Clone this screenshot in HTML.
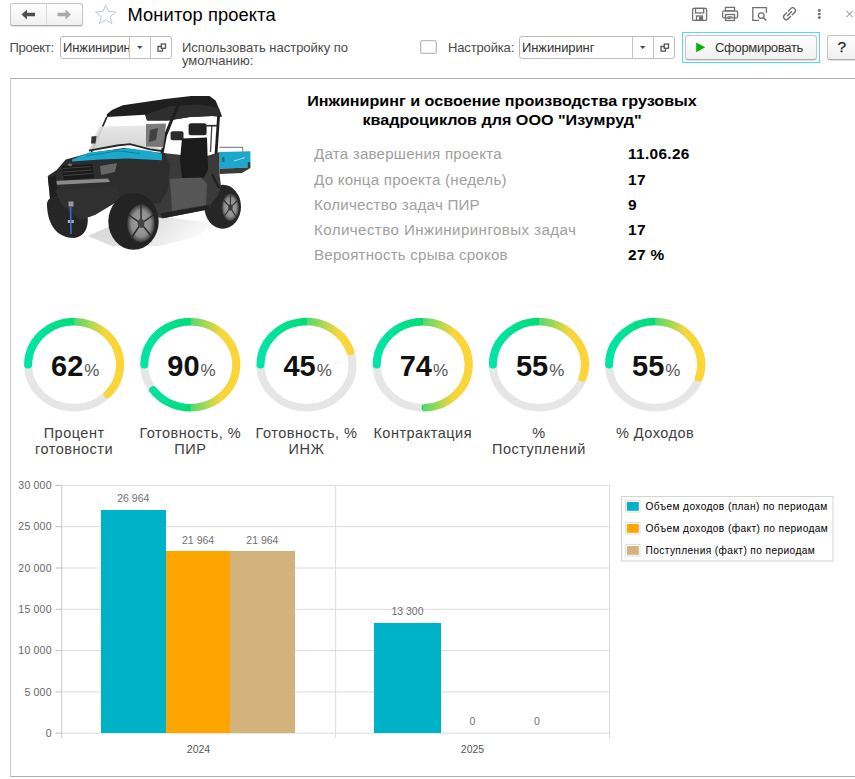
<!DOCTYPE html>
<html><head><meta charset="utf-8">
<style>
html,body{margin:0;padding:0;background:#fff;}
body{width:855px;height:779px;position:relative;overflow:hidden;font-family:"Liberation Sans",sans-serif;}
.a{position:absolute;white-space:nowrap;}
.btn{position:absolute;box-sizing:border-box;border:1px solid #c4c4c4;border-bottom-color:#aaa;border-radius:3px;background:linear-gradient(#ffffff,#f0f0f0);box-shadow:0 1px 1px rgba(0,0,0,0.12);}
.inp{position:absolute;box-sizing:border-box;border:1px solid #bcbcbc;border-radius:3px;background:#fff;overflow:hidden;}
.lbl{font-size:13px;color:#4a4a4a;}
.tx{position:absolute;white-space:nowrap;line-height:1;}
</style></head>
<body>
<!-- TOP BAR -->
<div class="btn" style="left:10px;top:3px;width:73px;height:23px;"></div>
<div class="a" style="left:46px;top:4px;width:1px;height:21px;background:#dcdcdc;"></div>
<svg class="a" style="left:0;top:0" width="855" height="30">
  <!-- left arrow -->
  <path d="M21.5 14.5 L27 9.5 L27 12.8 L35 12.8 L35 16.2 L27 16.2 L27 19.5 Z" fill="#4f4f4f"/>
  <!-- right arrow -->
  <path d="M71 14.5 L65.5 9.5 L65.5 12.8 L57.5 12.8 L57.5 16.2 L65.5 16.2 L65.5 19.5 Z" fill="#aaaaaa"/>
  <!-- star -->
  <path d="M105.7 5 L108.4 11.3 L115.8 12 L110.2 16.7 L112 23.6 L105.7 19.9 L99.4 23.6 L101.2 16.7 L95.6 12 L103 11.3 Z" fill="none" stroke="#b9c9d2" stroke-width="1"/>
  <!-- floppy -->
  <g fill="none" stroke="#707070" stroke-width="1.3">
    <rect x="692.6" y="8.4" width="14" height="12" rx="1"/>
    <rect x="695.5" y="8.4" width="8.2" height="4.5"/>
    <rect x="696.5" y="16" width="6" height="4.4"/>
  </g>
  <rect x="699" y="16.5" width="3" height="4" fill="#707070"/>
  <!-- printer -->
  <g fill="none" stroke="#707070" stroke-width="1.3">
    <rect x="725.5" y="7.4" width="9" height="3.5"/>
    <rect x="722.6" y="10.9" width="15" height="7" rx="1.5"/>
    <rect x="725.5" y="14.5" width="9" height="6"/>
  </g>
  <path d="M727.5 16.8 H732.5 M727.5 18.6 H730.5" stroke="#707070" stroke-width="1"/>
  <!-- preview -->
  <path d="M759 20.4 H752.8 V7.6 H766.4 V13" fill="none" stroke="#707070" stroke-width="1.3"/>
  <circle cx="761.2" cy="15.6" r="2.8" fill="none" stroke="#707070" stroke-width="1.3"/>
  <path d="M763.3 17.7 L766.3 20.5" stroke="#707070" stroke-width="1.6"/>
  <!-- link -->
  <g transform="translate(789.5 13.7) rotate(-45)" fill="none" stroke="#6a6a6a" stroke-width="1.3" stroke-linecap="round">
    <path d="M-1.2 -2.7 H-4.5 A2.7 2.7 0 0 0 -4.5 2.7 H-1.2"/>
    <path d="M1.2 2.7 H4.5 A2.7 2.7 0 0 0 4.5 -2.7 H1.2"/>
    <path d="M-3 0 H3"/>
  </g>
  <!-- dots -->
  <circle cx="819.3" cy="10.5" r="1.45" fill="#707070"/>
  <circle cx="819.3" cy="14.1" r="1.45" fill="#707070"/>
  <circle cx="819.3" cy="17.6" r="1.45" fill="#707070"/>
  <!-- close -->
  <path d="M846.3 10.8 L852.7 17.2 M852.7 10.8 L846.3 17.2" stroke="#808080" stroke-width="1"/>
</svg>
<div class="tx" style="left:127.5px;top:6px;font-size:18.3px;letter-spacing:0.12px;color:#000;">Монитор проекта</div>

<!-- ROW 2 -->
<div class="tx lbl" style="left:9.5px;top:41px;letter-spacing:-0.3px;">Проект:</div>
<div class="inp" style="left:60px;top:36px;width:112px;height:23px;">
  <div class="tx" style="left:2px;top:4px;font-size:13px;color:#333;width:66px;overflow:hidden;letter-spacing:-0.1px;">Инжиниринг</div>
</div>
<div class="a" style="left:129px;top:37px;width:1px;height:21px;background:#c4c4c4;"></div>
<div class="a" style="left:150px;top:37px;width:1px;height:21px;background:#c4c4c4;"></div>
<div class="tx lbl" style="left:182px;top:41px;line-height:13px;">Использовать настройку по<br>умолчанию:</div>
<div class="a" style="left:420px;top:40px;width:15px;height:12px;border:1px solid #bdbdbd;border-radius:2px;box-shadow:inset 0 0 0 0.6px #dcdcdc;"></div>
<div class="tx lbl" style="left:448px;top:41px;letter-spacing:-0.15px;">Настройка:</div>
<div class="inp" style="left:519px;top:36px;width:156px;height:23px;">
  <div class="tx" style="left:2px;top:4px;font-size:13px;color:#333;letter-spacing:-0.1px;">Инжиниринг</div>
</div>
<div class="a" style="left:632px;top:37px;width:1px;height:21px;background:#c4c4c4;"></div>
<div class="a" style="left:653px;top:37px;width:1px;height:21px;background:#c4c4c4;"></div>
<svg class="a" style="left:0;top:0" width="855" height="70">
  <path d="M137 46 H142.5 L139.75 48.9 Z" fill="#4a4a4a"/>
  <path d="M640 46 H645.5 L642.75 48.9 Z" fill="#4a4a4a"/>
  <g fill="none" stroke="#555" stroke-width="1.3">
    <rect x="161.3" y="44" width="4.2" height="4.3"/>
    <path d="M161.3 46.5 H158 V51.2 H162.5 V48.3"/>
    <rect x="664.3" y="44" width="4.2" height="4.3"/>
    <path d="M664.3 46.5 H661 V51.2 H665.5 V48.3"/>
  </g>
</svg>
<div class="a" style="left:682px;top:32px;width:136px;height:29px;border:1px solid #55d5fa;"></div>
<div class="btn" style="left:685px;top:35px;width:132px;height:25px;"></div>
<svg class="a" style="left:696px;top:42px" width="11" height="12"><path d="M0.2 0.4 L9.2 5.3 L0.2 10.2 Z" fill="#04b404"/></svg>
<div class="tx" style="left:715px;top:40.5px;font-size:13px;color:#333;letter-spacing:-0.3px;">Сформировать</div>
<div class="btn" style="left:827px;top:35px;width:40px;height:25px;"></div>
<div class="tx" style="left:837.6px;top:38.9px;font-size:15.5px;color:#1a1a1a;-webkit-text-stroke:0.25px #1a1a1a;">?</div>

<!-- CONTENT FRAME -->
<div class="a" style="left:10px;top:78px;width:900px;height:697px;border:1px solid #adadad;border-left-color:#c9c9c9;"></div>



<!-- UTV -->
<svg class="a" style="left:0;top:0" width="300" height="270">
  <defs>
    <linearGradient id="shd" x1="0" y1="0" x2="1" y2="0.3"><stop offset="0" stop-color="#d4d4d4"/><stop offset="0.6" stop-color="#e2e2e2"/><stop offset="1" stop-color="#fafafa"/></linearGradient>
    <linearGradient id="ws" x1="0" y1="0" x2="0" y2="1"><stop offset="0" stop-color="#e6e6e6"/><stop offset="1" stop-color="#cdcdcd"/></linearGradient>
    <radialGradient id="rim" cx="0.5" cy="0.5" r="0.5"><stop offset="0" stop-color="#4a4a4a"/><stop offset="0.3" stop-color="#9a9a9a"/><stop offset="0.7" stop-color="#8c8c8c"/><stop offset="1" stop-color="#3a3a3a"/></radialGradient>
  </defs>
  <!-- ground shadow -->
  <path d="M88 236 L120 222 L150 215 L212 223 L200 236 L160 246 L112 246 Z" fill="url(#shd)"/>
  <!-- rear wheel -->
  <ellipse cx="222.7" cy="206.7" rx="18.3" ry="22" fill="#262626"/>
  <ellipse cx="230.4" cy="207.4" rx="8.6" ry="13.6" fill="url(#rim)"/>
  <g stroke="#333" stroke-width="1.1"><path d="M230.4 207.4 L230.4 195 M230.4 207.4 L237 201 M230.4 207.4 L236 217 M230.4 207.4 L224.5 216 M230.4 207.4 L223.5 200"/></g>
  <ellipse cx="230.4" cy="207.4" rx="2.2" ry="3" fill="#3a3a3a"/>
  <!-- roof -->
  <path d="M106.8 114.3 L112 110 L122.8 105.2 L165.4 99.1 L191.2 96.1 L209.5 96.1 L215.6 100.6 L221.6 115.1 L221.6 116.8 L212 116 L190 117 L168 120.6 L147 120.6 L145 114.8 L106.8 117 Z" fill="#1f1f1f"/>
  <path d="M147 120.6 L168 120.6 L190 117 L212 116 L221.6 116.8 L219 108 L200 104.5 L170 106 L146 114.5 Z" fill="#2e2e2e"/>
  <!-- roll bars -->
  <path d="M106.8 117 L100 132.6 L91.5 152" stroke="#2a2a2a" stroke-width="1.8" fill="none"/>
  <path d="M179 103.7 L171.5 120.4 L165.4 135.6 L160.8 160" stroke="#1e1e1e" stroke-width="3" fill="none"/>
  <path d="M218.6 115.8 L215.6 160" stroke="#1e1e1e" stroke-width="2.8" fill="none"/>
  <path d="M211.8 126 L210.5 152" stroke="#444" stroke-width="1.3" fill="none"/>
  <path d="M206.4 125.7 L218.6 125.7" stroke="#2a2a2a" stroke-width="1.6" fill="none"/>
  <!-- windshield -->
  <path d="M99 126.5 L150 125.5 L166 124.5 L163 148 L150 149.4 L130 144.2 L117.2 145.5 L88.9 150.6 Z" fill="url(#ws)" opacity="0.9"/>
  <path d="M88.9 150.6 L117.2 145.5 L130 144.2 L150 149.4 L162 151" stroke="#262626" stroke-width="1.8" fill="none"/>
  <path d="M146 124 L166 123.5 L163.5 147 L146 146.5 Z" fill="#555" opacity="0.75"/>
  <path d="M150 130 L158 128 L156 140 L149 142 Z" fill="#333" opacity="0.8"/>
  <!-- mirrors -->
  <path d="M91.5 136.5 L96.6 136 L95.5 143.5 L91 143.5 Z" fill="#333"/>
  <rect x="170.6" y="131.3" width="12.9" height="9" rx="2" fill="#2b2b2b"/>
  <!-- cargo box -->
  <path d="M219.5 147.4 L242.7 147.4 L242.7 151.9" stroke="#8a8a8a" stroke-width="1.1" fill="none"/>
  <path d="M219.5 151.9 L250.4 151.3 L250.4 162.2 L247.8 167.4 L219.5 168.7 Z" fill="#1ca8cc"/>
  <path d="M247.8 162.2 L250.4 162.2 L250.4 168 L242 173 L219.5 174 L219.5 168.7 L247.8 167.4 Z" fill="#3a3a3a"/>
  <path d="M234 161 L245 157.5" stroke="#cfe8ef" stroke-width="0.8"/>
  <rect x="222" y="157" width="2.5" height="5" fill="#2a6d80"/>
  <!-- rear body / rocker -->
  <path d="M150 158 L163 153 L182 155 L207 156 L219.5 152 L219.5 174 L221 186 L218.2 195.2 L210.5 204.2 L209.2 209.3 L162.9 218.3 L150 215.8 Z" fill="#3a3a3a"/>
  <path d="M170 179 L200 176.5 L207 184 L206 205 L172 211 Z" fill="#565656"/>
  <path d="M160 213.5 L209.2 205 L209.2 209.3 L162.9 218.3 Z" fill="#222"/>
  <path d="M212 174 L219 188" stroke="#1e1e1e" stroke-width="2"/>
  <!-- seat -->
  <rect x="188.6" y="123.2" width="18" height="12" rx="2.5" fill="#232323"/>
  <path d="M182 138.5 L207 137.5 L208 170 L204 177.6 L182 178 L180 160 Z" fill="#1b1b1b"/>
  <!-- front body -->
  <path d="M56.7 170 L65.7 159.6 L72.2 157.7 L88.9 153.2 L123.7 148.1 L150 151.9 L165 153 L170 165 L168 190 L160 203 L140 206 L117.2 197.7 L100.5 210.6 L88.9 217 L78.6 210.6 L55.4 202.9 L49 187.4 L47.7 175.9 Z" fill="#2d2d2d"/>
  <!-- hood blue -->
  <path d="M72.1 159.4 L88.9 152.4 L128.2 148.2 L150 151 L161.9 153.8 L161.9 160.2 L128.2 158.5 L100 159.5 L72.1 161.4 Z" fill="#1aa8cc"/>
  <path d="M86 156 L118 150.8 L140 153.5" stroke="#0f7d9c" stroke-width="0.9" fill="none"/>
  <!-- grille & lights -->
  <path d="M62 166 L92 164 L94 178 L64 180 Z" fill="#1a1a1a"/>
  <path d="M63 168.5 L91 166.5 M63 172 L92 170 M64 175.5 L93 173.5" stroke="#4d4d4d" stroke-width="0.8"/>
  <ellipse cx="70" cy="164.8" rx="2" ry="1.4" fill="#777"/>
  <path d="M100 166 L117 163 L115 172 L101 175 Z" fill="#666"/>
  <path d="M52.9 181 L108 178.5 L110 182 L53.5 185 Z" fill="#8a8a8a"/>
  <path d="M88 191.5 L103 187.5 L103 190.5 L89 194.5 Z" fill="#8a8a8a"/>
  <path d="M48 178 L56 175 L58 200 L50 200 Z" fill="#1e1e1e"/>
  <!-- front small wheel -->
  <path d="M47 206 C46 197 56 194 66 198 L86 208 C90 222 88 236 74 238 C58 238 48 226 47 206 Z" fill="#262626"/>
  <!-- bumper lower -->
  <path d="M55 190 L117 186 L120 200 L95 215 L80 220 L62 205 Z" fill="#303030"/>
  <!-- winch strap -->
  <rect x="68.5" y="201.5" width="5" height="5" fill="#9a9a9a"/>
  <rect x="67.8" y="220" width="6" height="3" fill="#aaa"/>
  <path d="M70.5 206 L71 234" stroke="#3a6fd0" stroke-width="1.6"/>
  <!-- big front wheel -->
  <ellipse cx="133.5" cy="221.5" rx="25.2" ry="28.3" fill="#232323"/>
  <ellipse cx="141" cy="223.4" rx="13.8" ry="18.8" fill="url(#rim)"/>
  <g stroke="#2b2b2b" stroke-width="1.5">
    <path d="M141 223.4 L141 205.5 M141 223.4 L153.5 215 M141 223.4 L151.5 236.5 M141 223.4 L131 238.5 M141 223.4 L128 214.5"/>
  </g>
  <ellipse cx="141" cy="223.4" rx="3.3" ry="4.4" fill="#444"/>
</svg>

<!-- TEXT BLOCK -->
<div class="tx" style="left:251.5px;top:92.3px;width:500px;text-align:center;font-size:14.8px;line-height:19px;font-weight:bold;color:#000;transform:scaleX(1.09);transform-origin:250px 0;">Инжиниринг и освоение производства грузовых<br>квадроциклов для ООО "Изумруд"</div>
<div class="tx" style="left:314px;top:142.3px;font-size:14px;line-height:25.2px;letter-spacing:0.2px;color:#a0a0a0;transform:scaleX(1.08);transform-origin:0 0;">Дата завершения проекта<br>До конца проекта (недель)<br>Количество задач ПИР<br><span style="letter-spacing:0.38px">Количество Инжиниринговых задач</span><br>Вероятность срыва сроков</div>
<div class="tx" style="left:627.5px;top:142.3px;font-size:14px;line-height:25.2px;letter-spacing:0.3px;font-weight:bold;color:#000;transform:scaleX(1.1);transform-origin:0 0;">11.06.26<br>17<br>9<br>17<br>27 %</div>

<svg class="a" style="left:0;top:0" width="855" height="779"><defs><linearGradient id="gg" gradientUnits="userSpaceOnUse" x1="-50" y1="0" x2="50" y2="0"><stop offset="0" stop-color="#00e6aa"/><stop offset="0.5" stop-color="#00dc76"/><stop offset="0.505" stop-color="#52d96c"/><stop offset="0.8" stop-color="#f5d63c"/><stop offset="1" stop-color="#fed533"/></linearGradient></defs>
<g transform="translate(74.1 364.7) scale(1 0.936)"><circle r="46" fill="none" stroke="#e6e6e6" stroke-width="8"/><path d="M-46 0 A46 46 0 1 1 33.53 31.49" fill="none" stroke="url(#gg)" stroke-width="8" stroke-linecap="round"/></g>
<g transform="translate(190.3 364.7) scale(1 0.936)"><circle r="46" fill="none" stroke="#e6e6e6" stroke-width="8"/><path d="M-46 0 A46 46 0 1 1 -37.21 27.04" fill="none" stroke="url(#gg)" stroke-width="8" stroke-linecap="round"/></g>
<g transform="translate(306.5 364.7) scale(1 0.936)"><circle r="46" fill="none" stroke="#e6e6e6" stroke-width="8"/><path d="M-46 0 A46 46 0 0 1 43.75 -14.21" fill="none" stroke="url(#gg)" stroke-width="8" stroke-linecap="round"/></g>
<g transform="translate(422.7 364.7) scale(1 0.936)"><circle r="46" fill="none" stroke="#e6e6e6" stroke-width="8"/><path d="M-46 0 A46 46 0 1 1 2.89 45.91" fill="none" stroke="url(#gg)" stroke-width="8" stroke-linecap="round"/></g>
<g transform="translate(538.9 364.7) scale(1 0.936)"><circle r="46" fill="none" stroke="#e6e6e6" stroke-width="8"/><path d="M-46 0 A46 46 0 1 1 43.75 14.21" fill="none" stroke="url(#gg)" stroke-width="8" stroke-linecap="round"/></g>
<g transform="translate(655.1 364.7) scale(1 0.936)"><circle r="46" fill="none" stroke="#e6e6e6" stroke-width="8"/><path d="M-46 0 A46 46 0 1 1 43.75 14.21" fill="none" stroke="url(#gg)" stroke-width="8" stroke-linecap="round"/></g>
</svg>
<div class="tx" style="left:15.3px;top:351.5px;width:120px;text-align:center;color:#111;"><span style="font-size:29px;font-weight:bold;">62</span><span style="font-size:17px;color:#555;margin-left:1px;">%</span></div>
<div class="tx" style="left:14.1px;top:424.5px;width:120px;text-align:center;font-size:14.5px;line-height:16px;letter-spacing:0.5px;color:#404040;">Процент<br>готовности</div>
<div class="tx" style="left:131.5px;top:351.5px;width:120px;text-align:center;color:#111;"><span style="font-size:29px;font-weight:bold;">90</span><span style="font-size:17px;color:#555;margin-left:1px;">%</span></div>
<div class="tx" style="left:130.3px;top:424.5px;width:120px;text-align:center;font-size:14.5px;line-height:16px;letter-spacing:0.5px;color:#404040;">Готовность, %<br>ПИР</div>
<div class="tx" style="left:247.7px;top:351.5px;width:120px;text-align:center;color:#111;"><span style="font-size:29px;font-weight:bold;">45</span><span style="font-size:17px;color:#555;margin-left:1px;">%</span></div>
<div class="tx" style="left:246.5px;top:424.5px;width:120px;text-align:center;font-size:14.5px;line-height:16px;letter-spacing:0.5px;color:#404040;">Готовность, %<br>ИНЖ</div>
<div class="tx" style="left:363.9px;top:351.5px;width:120px;text-align:center;color:#111;"><span style="font-size:29px;font-weight:bold;">74</span><span style="font-size:17px;color:#555;margin-left:1px;">%</span></div>
<div class="tx" style="left:362.7px;top:424.5px;width:120px;text-align:center;font-size:14.5px;line-height:16px;letter-spacing:0.5px;color:#404040;">Контрактация</div>
<div class="tx" style="left:480.1px;top:351.5px;width:120px;text-align:center;color:#111;"><span style="font-size:29px;font-weight:bold;">55</span><span style="font-size:17px;color:#555;margin-left:1px;">%</span></div>
<div class="tx" style="left:478.9px;top:424.5px;width:120px;text-align:center;font-size:14.5px;line-height:16px;letter-spacing:0.5px;color:#404040;">%<br>Поступлений</div>
<div class="tx" style="left:596.3px;top:351.5px;width:120px;text-align:center;color:#111;"><span style="font-size:29px;font-weight:bold;">55</span><span style="font-size:17px;color:#555;margin-left:1px;">%</span></div>
<div class="tx" style="left:595.1px;top:424.5px;width:120px;text-align:center;font-size:14.5px;line-height:16px;letter-spacing:0.5px;color:#404040;">% Доходов</div>
<svg class="a" style="left:0;top:0" width="855" height="779" font-family="Liberation Sans">
<line x1="61.7" y1="733.2" x2="609.5" y2="733.2" stroke="#dcdcdc" stroke-width="1"/>
<line x1="55.5" y1="733.2" x2="61.7" y2="733.2" stroke="#bdbdbd" stroke-width="1"/>
<text x="51.7" y="736.9" text-anchor="end" font-size="10.5" letter-spacing="0.2" fill="#666">0</text>
<line x1="61.7" y1="691.9" x2="609.5" y2="691.9" stroke="#dcdcdc" stroke-width="1"/>
<line x1="55.5" y1="691.9" x2="61.7" y2="691.9" stroke="#bdbdbd" stroke-width="1"/>
<text x="51.7" y="695.6" text-anchor="end" font-size="10.5" letter-spacing="0.2" fill="#666">5 000</text>
<line x1="61.7" y1="650.6" x2="609.5" y2="650.6" stroke="#dcdcdc" stroke-width="1"/>
<line x1="55.5" y1="650.6" x2="61.7" y2="650.6" stroke="#bdbdbd" stroke-width="1"/>
<text x="51.7" y="654.3" text-anchor="end" font-size="10.5" letter-spacing="0.2" fill="#666">10 000</text>
<line x1="61.7" y1="609.3" x2="609.5" y2="609.3" stroke="#dcdcdc" stroke-width="1"/>
<line x1="55.5" y1="609.3" x2="61.7" y2="609.3" stroke="#bdbdbd" stroke-width="1"/>
<text x="51.7" y="613.0" text-anchor="end" font-size="10.5" letter-spacing="0.2" fill="#666">15 000</text>
<line x1="61.7" y1="568.0" x2="609.5" y2="568.0" stroke="#dcdcdc" stroke-width="1"/>
<line x1="55.5" y1="568.0" x2="61.7" y2="568.0" stroke="#bdbdbd" stroke-width="1"/>
<text x="51.7" y="571.7" text-anchor="end" font-size="10.5" letter-spacing="0.2" fill="#666">20 000</text>
<line x1="61.7" y1="526.7" x2="609.5" y2="526.7" stroke="#dcdcdc" stroke-width="1"/>
<line x1="55.5" y1="526.7" x2="61.7" y2="526.7" stroke="#bdbdbd" stroke-width="1"/>
<text x="51.7" y="530.4" text-anchor="end" font-size="10.5" letter-spacing="0.2" fill="#666">25 000</text>
<line x1="61.7" y1="485.4" x2="609.5" y2="485.4" stroke="#dcdcdc" stroke-width="1"/>
<line x1="55.5" y1="485.4" x2="61.7" y2="485.4" stroke="#bdbdbd" stroke-width="1"/>
<text x="51.7" y="489.1" text-anchor="end" font-size="10.5" letter-spacing="0.2" fill="#666">30 000</text>
<line x1="61.7" y1="485" x2="61.7" y2="738" stroke="#c8c8c8"/>
<line x1="335.6" y1="485" x2="335.6" y2="738" stroke="#dcdcdc"/>
<line x1="609.5" y1="485" x2="609.5" y2="738" stroke="#dcdcdc"/>
<rect shape-rendering="crispEdges" x="101" y="510" width="65" height="223.2" fill="#00b2c8"/>
<text x="133.3" y="502.3" text-anchor="middle" font-size="10.5" fill="#707070">26 964</text>
<rect shape-rendering="crispEdges" x="166" y="551" width="64" height="182.2" fill="#ffa500"/>
<text x="198.1" y="543.6" text-anchor="middle" font-size="10.5" fill="#707070">21 964</text>
<rect shape-rendering="crispEdges" x="230" y="551" width="65" height="182.2" fill="#d3b37b"/>
<text x="262.4" y="543.6" text-anchor="middle" font-size="10.5" fill="#707070">21 964</text>
<rect shape-rendering="crispEdges" x="374" y="623" width="67" height="110.2" fill="#00b2c8"/>
<text x="407.5" y="615.1" text-anchor="middle" font-size="10.5" fill="#707070">13 300</text>
<text x="472.5" y="725" text-anchor="middle" font-size="10.5" fill="#707070">0</text>
<text x="537" y="725" text-anchor="middle" font-size="10.5" fill="#707070">0</text>
<text x="198.5" y="752.5" text-anchor="middle" font-size="10.5" fill="#555">2024</text>
<text x="472.5" y="752.5" text-anchor="middle" font-size="10.5" fill="#555">2025</text>
<rect x="621.5" y="496.5" width="211.5" height="64.5" fill="#fff" stroke="#d4d4d4"/>
<rect x="625.5" y="500.5" width="14.5" height="11.5" fill="#fff" stroke="#dedede"/>
<rect x="627" y="502.0" width="11.8" height="8.8" fill="#00b2c8"/>
<text x="645.5" y="509.8" font-size="10.2" letter-spacing="0.38" fill="#000">Объем доходов (план) по периодам</text>
<rect x="625.5" y="522.5" width="14.5" height="11.5" fill="#fff" stroke="#dedede"/>
<rect x="627" y="524.0" width="11.8" height="8.8" fill="#ffa500"/>
<text x="645.5" y="531.8" font-size="10.2" letter-spacing="0.38" fill="#000">Объем доходов (факт) по периодам</text>
<rect x="625.5" y="544.5" width="14.5" height="11.5" fill="#fff" stroke="#dedede"/>
<rect x="627" y="546.0" width="11.8" height="8.8" fill="#d3b37b"/>
<text x="645.5" y="553.8" font-size="10.2" letter-spacing="0.38" fill="#000">Поступления (факт) по периодам</text>
</svg>
</body></html>
